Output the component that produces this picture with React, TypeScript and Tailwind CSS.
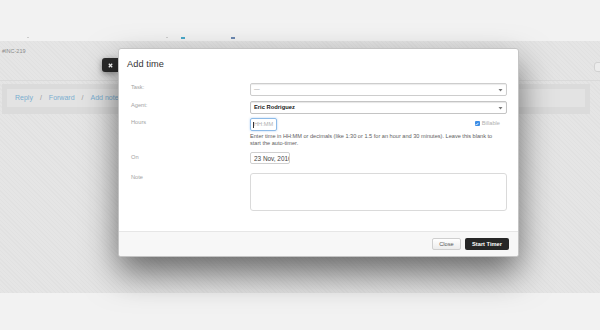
import React from "react";

const font = { fontFamily: '"Liberation Sans", Arial, sans-serif' };

function Caret() {
  return (
    <svg width="5" height="4" viewBox="0 0 5 4" className="shrink-0">
      <path d="M0.5 1 L4.5 1 L2.5 3.5 Z" fill="#777" />
    </svg>
  );
}

export default function App() {
  return (
    <div className="w-[600px] h-[330px] flex flex-col bg-[#f2f2f2] overflow-hidden" style={font}>
      {/* top strip */}
      <div className="h-[41px] relative shrink-0">
        <div className="absolute left-[27px] top-[37px] w-[2px] h-[1px] bg-[#ccc]" />
        <div className="absolute left-[166px] top-[37px] w-[2px] h-[1px] bg-[#ccc]" />
        <div className="absolute left-[181px] top-[37px] w-[4px] h-[2px] bg-[#4aa8c8]" />
        <div className="absolute left-[231px] top-[37px] w-[4px] h-[2px] bg-[#6c88b0]" />
      </div>

      {/* backdrop area */}
      <div className="h-[252px] shrink-0 relative bg-[repeating-linear-gradient(45deg,#e1e1e1_0px,#e1e1e1_1px,#e5e5e5_1px,#e5e5e5_3px)]">
        <div className="flex flex-col">
          <div className="h-[39px] px-[2px] pt-[7px] text-[5.5px] leading-[7px] text-[#8a8a8a] flex justify-between">
            <span>#INC-219</span>
            <span className="mt-[14px] w-[8px] h-[10px] rounded-l-[3px] border border-[#d2d2d2] bg-[#ececec] -mr-[4px]" />
          </div>
          <div className="h-[36px] pl-[2px] pr-[10px] pt-[3px] border-t border-[#dadada]">
            <div className="h-[30px] bg-[#dbdbdb] p-[5px] pb-[5px]">
              <div className="h-[18px] bg-[#e3e3e3] flex items-center pl-[8px] gap-[7px] text-[7px] text-[#7aaed0]">
                <span>Reply</span>
                <span className="text-[#9a9a9a]">/</span>
                <span>Forward</span>
                <span className="text-[#9a9a9a]">/</span>
                <span>Add note</span>
              </div>
            </div>
          </div>
        </div>

        {/* close X tab */}
        <div className="absolute left-[102px] top-[17px] w-[16px] h-[14px] bg-[#2b2b2b] rounded-l-[3px] flex items-center justify-center shadow-[0_2px_6px_rgba(0,0,0,0.4)]">
          <svg width="5" height="5" viewBox="0 0 5 5">
            <path d="M0.8 0.8 L4.2 4.2 M4.2 0.8 L0.8 4.2" stroke="#fff" strokeWidth="1.3" />
          </svg>
        </div>

        {/* modal */}
        <div className="absolute left-[118px] top-[7px] w-[401px] h-[209px] bg-white rounded-[3px] border border-[#c4c4c4] shadow-[0_16px_34px_rgba(0,0,0,0.55)] flex flex-col overflow-hidden">
          <div className="h-[34px] px-[8px] flex items-center shrink-0">
            <span className="text-[9.2px] font-medium text-[#333] tracking-[0.1px] -mt-[3px]">Add time</span>
          </div>
          <div className="flex flex-col pl-[12px] pr-[11px] text-[5.7px] leading-[7px] grow">
            {/* Task */}
            <div className="flex">
              <div className="w-[119px] shrink-0 pt-[1px] text-[#a2a2a2]">Task:</div>
              <div className="grow h-[13px] border border-[#cdcdcd] rounded-[2px] shadow-[inset_0_1px_1px_rgba(0,0,0,0.08)] flex items-center justify-between px-[3px]">
                <span className="text-[#888]">—</span>
                <Caret />
              </div>
            </div>
            {/* Agent */}
            <div className="flex mt-[5px]">
              <div className="w-[119px] shrink-0 pt-[1px] text-[#a2a2a2]">Agent:</div>
              <div className="grow h-[13px] border border-[#c4c4c4] rounded-[2px] shadow-[inset_0_1px_1px_rgba(0,0,0,0.1)] flex items-center justify-between px-[3px]">
                <span className="text-[#222] font-semibold text-[5.8px]">Eric Rodriguez</span>
                <Caret />
              </div>
            </div>
            {/* Hours */}
            <div className="flex mt-[4px]">
              <div className="w-[119px] shrink-0 pt-[1px] text-[#a2a2a2]">Hours</div>
              <div className="grow flex flex-col">
                <div className="flex items-start justify-between">
                  <div className="w-[27px] h-[13px] border border-[#8dbbe8] rounded-[2px] shadow-[0_0_2px_rgba(80,150,230,0.5)] flex items-center pl-[2px]">
                    <span className="w-[0.5px] h-[6px] bg-[#333] mr-[0.5px]" />
                    <span className="text-[#b0b0b0]">HH:MM</span>
                  </div>
                  <div className="flex items-center gap-[2px] mt-[2px] mr-[7px]">
                    <span className="w-[5px] h-[5px] rounded-[1px] bg-[#3d8ee6] flex items-center justify-center">
                      <svg width="4" height="4" viewBox="0 0 4 4">
                        <path d="M0.6 2 L1.6 3 L3.4 0.9" stroke="#fff" strokeWidth="0.8" fill="none" />
                      </svg>
                    </span>
                    <span className="text-[#b0b0b0]">Billable</span>
                  </div>
                </div>
                <div className="mt-[2px] text-[#5e5e5e] text-[5.6px] leading-[7px] pr-[8px]">
                  Enter time in HH:MM or decimals (like 1:30 or 1.5 for an hour and 30 minutes). Leave this blank to start the auto-timer.
                </div>
              </div>
            </div>
            {/* On */}
            <div className="flex mt-[5px]">
              <div className="w-[119px] shrink-0 pt-[2px] text-[#a2a2a2]">On</div>
              <div className="w-[40px] h-[12px] border border-[#d0d0d0] rounded-[2px] flex items-center pl-[3px] overflow-hidden whitespace-nowrap">
                <span className="text-[#444] text-[6.4px]">23 Nov, 2016</span>
              </div>
            </div>
            {/* Note */}
            <div className="flex mt-[9px]">
              <div className="w-[119px] shrink-0 pt-[1px] text-[#a2a2a2]">Note</div>
              <div className="grow h-[38px] border border-[#dadada] rounded-[3px]" />
            </div>
          </div>
          <div className="h-[25px] shrink-0 border-t-[1.5px] border-[#e6e6e6] bg-[#f7f7f7] flex items-center justify-end gap-[4px] pr-[9px]">
            <div className="w-[29px] h-[12px] rounded-[2px] border border-[#cfcfcf] bg-gradient-to-b from-[#ffffff] to-[#ececec] flex items-center justify-center text-[5.7px] text-[#555]">
              Close
            </div>
            <div className="w-[44px] h-[12px] rounded-[2px] bg-[#262626] flex items-center justify-center text-[5.7px] font-bold text-white">
              Start Timer
            </div>
          </div>
        </div>
      </div>

      <div className="grow bg-[#f2f2f2]" />
    </div>
  );
}
